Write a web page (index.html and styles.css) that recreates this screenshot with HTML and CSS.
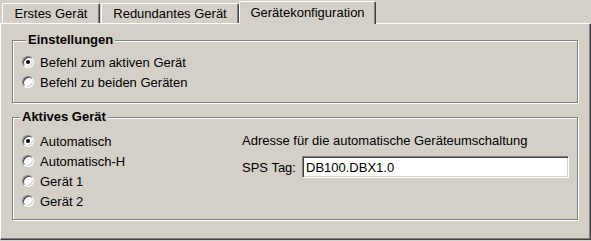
FILE: index.html
```html
<!DOCTYPE html>
<html lang="de">
<head>
    <meta charset="UTF-8">
    <title>Gerätekonfiguration</title>
    <link rel="stylesheet" href="styles.css">
</head>
<body>
    <!-- Tab strip -->
    <div class="tabs">
        <div class="tab tab-first">Erstes Gerät</div>
        <div class="tab tab-second">Redundantes Gerät</div>
        <div class="tab tab-active">Gerätekonfiguration</div>
    </div>

    <!-- Tab page -->
    <div class="panel">
        <div class="group group-settings">
            <span class="group-title title-settings">Einstellungen</span>
            <label class="option"><input type="radio" name="befehl" checked> Befehl zum aktiven Gerät</label>
            <label class="option"><input type="radio" name="befehl"> Befehl zu beiden Geräten</label>
        </div>

        <div class="group group-active">
            <span class="group-title title-active">Aktives Gerät</span>
            <div class="columns">
                <div class="options">
                    <label class="option"><input type="radio" name="geraet" checked> Automatisch</label>
                    <label class="option"><input type="radio" name="geraet"> Automatisch-H</label>
                    <label class="option"><input type="radio" name="geraet"> Gerät 1</label>
                    <label class="option"><input type="radio" name="geraet"> Gerät 2</label>
                </div>
                <div class="address">
                    <div class="address-caption">Adresse für die automatische Geräteumschaltung</div>
                    <div class="tag-row">
                        <label for="sps_tag">SPS Tag:</label>
                        <input type="text" id="sps_tag" value="DB100.DBX1.0">
                    </div>
                </div>
            </div>
        </div>
    </div>
</body>
</html>
```

FILE: styles.css
```css
/* General body styling */
body {
    font-family: 'Liberation Sans', Arial, sans-serif;
    font-size: 13px;
    margin: 0;
    padding: 0;
    background: #d4d0c8;
    color: #000;
    width: 591px;
    height: 241px;
    overflow: hidden;
}

/* Tab strip */
.tabs {
    display: flex;
    align-items: flex-end;
    height: 23px;
    padding-left: 2px;
}

.tab {
    box-sizing: border-box;
    height: 20px;
    line-height: 19px;
    text-align: center;
    border-top: 1px solid #fff;
    border-left: 1px solid #fff;
    border-right: 1px solid #404040;
    border-radius: 2px 2px 0 0;
    box-shadow: inset -1px 0 0 #808080;
}

.tab-first {
    width: 98px;
}

.tab-second {
    width: 138px;
    margin-left: 1px;
}

.tab-active {
    width: 137px;
    height: 23px;
    line-height: 21px;
    margin-bottom: -1px;
    position: relative;
    z-index: 1;
    background: #d4d0c8;
}

/* Tab page */
.panel {
    box-sizing: border-box;
    height: 217px;
    border-top: 1px solid #fff;
    border-left: 1px solid #fff;
    border-right: 1px solid #404040;
    border-bottom: 1px solid #404040;
    box-shadow: inset -1px -1px 0 #808080;
    padding: 16px 12px 0 11px;
}

/* Etched group boxes */
.group {
    position: relative;
    border: 1px solid #808080;
    box-shadow: 1px 1px 0 #fff, inset 1px 1px 0 #fff;
    padding-left: 9px;
}

.group-settings {
    height: 40px;
    padding-top: 11px;
    padding-bottom: 10px;
}

.group-active {
    margin-top: 14px;
    height: 80px;
    padding-top: 13px;
    padding-bottom: 8px;
}

.group-title {
    position: absolute;
    top: -9px;
    padding: 0 2px;
    background: #d4d0c8;
    font-weight: bold;
    line-height: 16px;
}

.title-settings {
    left: 13px;
}

.title-active {
    left: 7px;
}

/* Radio options */
.option {
    display: flex;
    align-items: center;
    height: 20px;
}

.option input {
    appearance: none;
    -webkit-appearance: none;
    box-sizing: border-box;
    width: 12px;
    height: 12px;
    margin: 0 6px 0 0;
    border-radius: 50%;
    background: #fff;
    border: 1px solid;
    border-color: #808080 #fff #fff #808080;
    box-shadow: inset 1px 1px 0 #404040, inset -1px -1px 0 #d4d0c8;
    position: relative;
}

.option input:checked::after {
    content: "";
    position: absolute;
    left: 3px;
    top: 3px;
    width: 4px;
    height: 4px;
    border-radius: 50%;
    background: #000;
}

/* Two columns in the second group */
.columns {
    display: flex;
}

.options {
    width: 220px;
}

.address-caption {
    line-height: 20px;
}

.tag-row {
    display: flex;
    align-items: center;
    margin-top: 5px;
}

.tag-row label {
    width: 60px;
}

.tag-row input {
    box-sizing: border-box;
    width: 267px;
    height: 22px;
    margin: 0;
    padding: 0 3px;
    font-family: inherit;
    font-size: 13px;
    background: #fff;
    border: 1px solid;
    border-color: #808080 #fff #fff #808080;
    box-shadow: inset 1px 1px 0 #404040, inset -1px -1px 0 #d4d0c8;
    outline: none;
}
```
